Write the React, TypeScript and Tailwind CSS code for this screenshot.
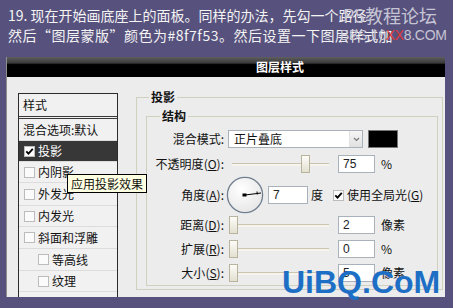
const cjk = "font-['Noto_Sans_CJK_SC',sans-serif]";

type Row = { label: string; checked?: boolean; active?: boolean; indent?: boolean; h: string };

const rows: Row[] = [
  { label: "混合选项:默认", h: "h-[22px]" },
  { label: "投影", checked: true, active: true, h: "h-[21px]" },
  { label: "内阴影", h: "h-[21px]" },
  { label: "外发光", h: "h-[23px]" },
  { label: "内发光", h: "h-[21px]" },
  { label: "斜面和浮雕", h: "h-[22px]" },
  { label: "等高线", indent: true, h: "h-[22px]" },
  { label: "纹理", indent: true, h: "h-[21px]" },
];

function Check({ checked }: { checked?: boolean }) {
  return (
    <span className="flex h-[11px] w-[11px] shrink-0 items-center justify-center border border-[#bcbcbc] bg-[#fbfbfb]">
      {checked && (
        <svg width="9" height="9" viewBox="0 0 9 9">
          <path d="M1.3 4.3 L3.5 6.6 L7.8 1.8" stroke="#000" strokeWidth="1.8" fill="none" />
        </svg>
      )}
    </span>
  );
}

function Slider({ pos }: { pos: number }) {
  return (
    <div className="relative h-[18px] w-[100px] shrink-0">
      <div className="absolute left-[3px] right-0 top-[8px] h-[3px] border-t border-[#c9c4ae] bg-[#f6f4ec]" />
      <div
        className="absolute top-0 h-[18px] w-[9px] border border-[#b8b39c] bg-[linear-gradient(#fdfcf8,#e3e0d0)]"
        style={{ left: pos }}
      />
    </div>
  );
}

function NumBox({ value, w = "w-[37px]" }: { value: string; w?: string }) {
  return (
    <div className={`h-[18px] ${w} shrink-0 border border-[#a9b1ba] bg-white pl-[4px] font-['Liberation_Sans',sans-serif] text-[12px] leading-[16px] text-[#222]`}>
      {value}
    </div>
  );
}

function Label({ text, hot }: { text: string; hot?: string }) {
  return (
    <div className="w-[77px] shrink-0 text-right text-[12px] leading-[18px] text-[#111]">
      {text}
      {hot && (
        <>
          (<span className="underline">{hot}</span>)
        </>
      )}
      :
    </div>
  );
}

function SliderRow({ text, hot, pos, value, unit, mt }: { text: string; hot: string; pos: number; value: string; unit: string; mt: string }) {
  return (
    <div className={`flex h-[18px] items-center ${mt}`}>
      <Label text={text} hot={hot} />
      <div className="ml-[5px]">
        <Slider pos={pos} />
      </div>
      <div className="ml-[9px]">
        <NumBox value={value} />
      </div>
      <span className="ml-[6px] text-[12px] leading-[18px] text-[#111]">{unit}</span>
    </div>
  );
}

function Dial() {
  return (
    <svg width="38" height="38" viewBox="0 0 38 38">
      <defs>
        <radialGradient id="dialfill" cx="40%" cy="35%" r="70%">
          <stop offset="0" stopColor="#ffffff" />
          <stop offset="1" stopColor="#e6e6e6" />
        </radialGradient>
      </defs>
      <circle cx="19" cy="19" r="17.6" fill="url(#dialfill)" stroke="#6f7f90" strokeWidth="1.3" />
      <line x1="19" y1="19" x2="35" y2="17" stroke="#000" strokeWidth="1" />
      <line x1="31" y1="15.5" x2="31.3" y2="18.5" stroke="#000" strokeWidth="1" />
      <rect x="16.5" y="17.5" width="4" height="3" fill="#000" />
    </svg>
  );
}

function Dialog() {
  return (
    <div className="ml-[6px] mt-[12px] flex h-[240px] w-[439px] flex-col border-l border-[#8e8e8e] bg-[#ececec]">
      <div className="flex h-[20px] items-center bg-[linear-gradient(#5e5e5e,#3a3a3a_30%,#000_38%,#000)] pl-[249px] text-[12px] font-bold text-white">
        图层样式
      </div>
      <div className="flex flex-1 pl-[11px] pr-[2px]">
        {/* style list */}
        <div className="mt-[16px] flex w-[100px] flex-col border-x border-t border-[#2c2c2c] bg-[#f1f1f1] text-[12px] text-[#111]">
          <div className="flex h-[25px] items-center border-b-[3px] border-double border-[#3a3a3a] pl-[4px]">样式</div>
          {rows.map((r) => (
            <div
              key={r.label}
              className={`flex ${r.h} items-center border-b border-[#dcdcdc] ${r.active ? "bg-[#373737] text-white" : ""} ${r.label === "混合选项:默认" ? "pl-[4px]" : r.indent ? "pl-[19px]" : "pl-[5px]"}`}
            >
              {r.label !== "混合选项:默认" && <Check checked={r.checked} />}
              <span className={r.label === "混合选项:默认" ? "" : "ml-[3px]"}>{r.label}</span>
            </div>
          ))}
        </div>

        {/* drop shadow panel */}
        <fieldset className="ml-[18px] mt-[12px] h-[201px] flex-1 border border-[#d0d0bf]">
          <legend className="ml-[12px] px-[2px] text-[12px] font-bold leading-[16px] text-[#111]">投影</legend>
          <div className="pl-[9px] pr-[4px] pt-[3px]">
            <fieldset className="h-[178px] border border-[#d0d0bf]">
              <legend className="ml-[13px] px-[2px] text-[12px] font-bold leading-[16px] text-[#111]">结构</legend>

              <div className="mt-[6px] flex h-[18px] items-center">
                <Label text="混合模式" />
                <div className="ml-[4px] flex h-[18px] w-[135px] items-center border border-[#a9b1ba] bg-white">
                  <span className="flex-1 pl-[5px] text-[12px] leading-[16px] text-[#111]">正片叠底</span>
                  <span className="flex h-[16px] w-[13px] items-center justify-center border-l border-[#e2e2e2] bg-[linear-gradient(#f6f6f6,#e0e0e0)]">
                    <svg width="7" height="5" viewBox="0 0 7 5">
                      <path d="M1 1 L3.5 3.5 L6 1" stroke="#777" strokeWidth="1.2" fill="none" />
                    </svg>
                  </span>
                </div>
                <div className="ml-[5px] h-[18px] w-[30px] border border-[#777] bg-black" />
              </div>

              <SliderRow text="不透明度" hot="O" pos={72} value="75" unit="%" mt="mt-[7px]" />

              <div className="mt-[3px] flex h-[38px] items-center">
                <Label text="角度" hot="A" />
                <div className="ml-[2px] flex">
                  <Dial />
                </div>
                <div className="ml-[4px]">
                  <NumBox value="7" w="w-[40px]" />
                </div>
                <span className="ml-[3px] text-[12px] text-[#111]">度</span>
                <div className="ml-[10px] flex items-center">
                  <Check checked />
                  <span className="ml-[3px] text-[12px] text-[#111]">
                    使用全局光(<span className="underline">G</span>)
                  </span>
                </div>
              </div>

              <SliderRow text="距离" hot="D" pos={0} value="2" unit="像素" mt="mt-[2px]" />
              <SliderRow text="扩展" hot="R" pos={0} value="0" unit="%" mt="mt-[6px]" />
              <SliderRow text="大小" hot="S" pos={0} value="5" unit="像素" mt="mt-[6px]" />
            </fieldset>
          </div>
        </fieldset>
      </div>
    </div>
  );
}

export default function App() {
  return (
    <div className={`relative h-[308px] w-[453px] overflow-hidden bg-[#57517d] ${cjk}`}>
      <div className="whitespace-nowrap px-[8px] pt-[5px] text-[14px] leading-[20px] text-[#f4f4f4]">
        <p>19. 现在开始画底座上的面板。同样的办法，先勾一个路径</p>
        <p className="tracking-[0.5px]">然后“图层蒙版”颜色为#8f7f53。然后设置一下图层样式加</p>
      </div>

      <div className="absolute left-[343px] top-[3px] text-[18px] leading-[24px] text-[#c6c5d4]">PS教程论坛</div>
      <div className="absolute left-[340px] top-[26px] font-['Liberation_Sans',sans-serif] text-[14px] leading-[18px] tracking-[-0.3px] text-[#c6c5d4]">
        BBS.16<span className="text-[#e23a3a]">XX</span>8.COM
      </div>

      <Dialog />

      <div className="absolute left-[67px] top-[174px] h-[19px] border border-black bg-[#ffffe1] px-[3px] text-[12px] leading-[17px] text-[#111]">
        应用投影效果
      </div>

      <div className="absolute left-[282px] top-[266px] font-['Liberation_Sans',sans-serif] text-[32px] font-bold leading-[32px] text-[#1d6fc6]">
        UiBQ.CoM
      </div>
    </div>
  );
}
